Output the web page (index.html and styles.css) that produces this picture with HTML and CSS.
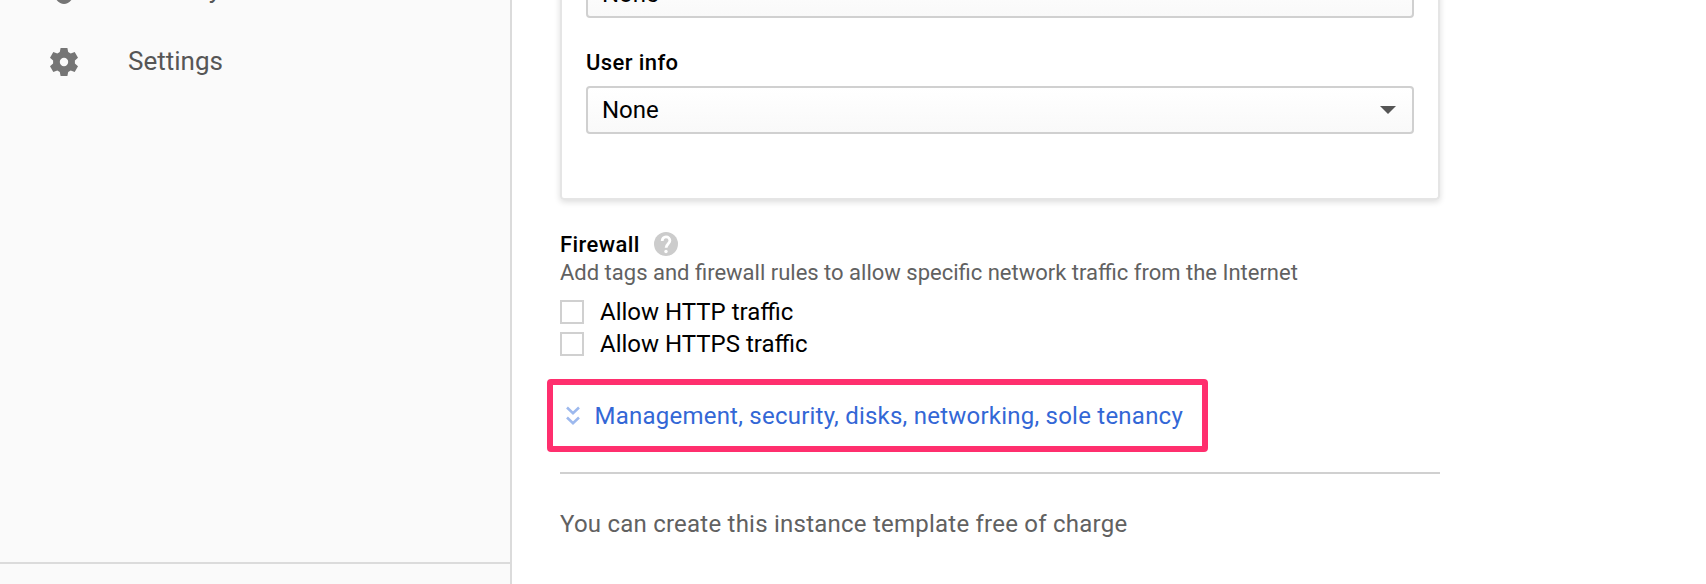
FILE: index.html
```html
<!DOCTYPE html>
<html lang="en">
<head>
<meta charset="utf-8">
<title>Create an instance template</title>
<link rel="stylesheet" href="styles.css">
</head>
<body>
<div class="app">
  <nav class="sidebar">
    <div class="nav-list">
      <a class="nav-item">
        <svg class="nav-icon" viewBox="0 0 28 28"><path d="M14 0 25 5V14C25 22 19 28 14 28 9 28 3 22 3 14V5Z"/></svg>
        <span class="nav-text">Security</span>
      </a>
      <a class="nav-item">
        <svg class="nav-icon" viewBox="0 0 28 28"><path fill-rule="evenodd" d="M10.600 0h6.800l.8 4 2.500 1.400 4-1.400 3.300 5.800-3.100 2.700v3l3.100 2.700-3.300 5.800-4-1.400-2.500 1.400-.8 4h-6.800l-.8-4-2.500-1.400-4 1.400L0 18.200l3.100-2.700v-3L0 9.800 3.300 4l4 1.400L9.800 4ZM14 9.800a4.200 4.200 0 1 0 0 8.400 4.200 4.200 0 1 0 0-8.400Z"/></svg>
        <span class="nav-text">Settings</span>
      </a>
    </div>
    <div class="sidebar-footer"></div>
  </nav>
  <main class="content">
    <section class="card">
      <div class="select"><span>None</span><i class="caret"></i></div>
      <h3 class="label">User info</h3>
      <div class="select"><span>None</span><i class="caret"></i></div>
    </section>
    <div class="firewall-head">
      <h3 class="label firewall-label">Firewall</h3>
      <svg class="help" viewBox="0 0 24 24"><circle cx="12" cy="12" r="12" fill="#ccc"/><path d="M8.200 9.100C8.200 6.600 9.800 4.900 12 4.900s3.900 1.500 3.900 3.700c0 2.900-3.800 3.400-3.800 7.200" fill="none" stroke="#fff" stroke-width="2.800"/><circle cx="12" cy="19.500" r="1.700" fill="#fff"/></svg>
    </div>
    <p class="hint">Add tags and firewall rules to allow specific network traffic from the Internet</p>
    <label class="check"><i class="box"></i><span>Allow HTTP traffic</span></label>
    <label class="check"><i class="box"></i><span>Allow HTTPS traffic</span></label>
    <div class="highlight">
      <svg class="expand" viewBox="0 0 14 20"><path d="M1 1.500 7 7.200 13 1.500M1 11.500 7 17.200 13 11.500"/></svg>
      <a class="link">Management, security, disks, networking, sole tenancy</a>
    </div>
    <hr class="rule">
    <p class="note">You can create this instance template free of charge</p>
  </main>
</div>
</body>
</html>
```
FILE: styles.css
```css
* { box-sizing: border-box; }
body { margin: 0; background: #fff; font-family: Roboto, sans-serif; color: #000; }
h3, p { margin: 0; }
.app { display: flex; width: 1706px; height: 584px; overflow: hidden; }
.sidebar { width: 512px; flex: none; height: 584px; background: #fafafa; border-right: 2px solid #dbdbdb; display: flex; flex-direction: column; overflow: hidden; }
.nav-list { flex: 1; min-height: 0; margin-top: -46px; }
.nav-item { display: flex; align-items: center; height: 72px; padding-left: 50px; font-size: 26px; color: #565656; }
.nav-icon { width: 28px; height: 28px; margin-right: 50px; fill: #757575; }
.nav-text { padding-bottom: 2px; }
.sidebar-footer { height: 22px; border-top: 2px solid #dbdbdb; flex: none; }
.content { padding-left: 48px; width: 928px; }
.card { height: 230px; margin-top: -30px; padding: 0 24px; border: 2px solid #e5e5e5; border-top: 0; border-radius: 4px; box-shadow: 0 2px 6px rgba(0,0,0,.14); }
.select { display: flex; align-items: center; justify-content: space-between; height: 48px; padding: 0 16px 0 14px; border: 2px solid #d0d0d0; border-radius: 4px; background: linear-gradient(#fff, #f9f9f9); font-size: 24px; }
.caret { border: 8px solid transparent; border-top-color: #555; border-bottom: 0; }
.label { font-size: 22px; font-weight: 500; line-height: 28px; letter-spacing: .4px; }
.card .label { margin: 31px 0 9px; }
.firewall-head { display: flex; align-items: center; height: 28px; margin-top: 30px; }
.firewall-label { padding-top: 2px; }
.help { width: 24px; height: 24px; margin-left: 14px; }
.hint { margin: 1px 0 9px; font-size: 22px; line-height: 28px; color: #616161; white-space: nowrap; }
.check { display: flex; align-items: center; height: 32px; font-size: 24px; }
.box { width: 24px; height: 24px; border: 2px solid #d0d0d0; margin-right: 16px; }
.highlight { display: flex; align-items: center; width: 661px; height: 73px; margin: 19px 0 0 -13px; padding-left: 13px; border: 6px solid #ff2f6e; border-radius: 4px; }
.expand { width: 14px; height: 20px; margin-right: 14.5px; fill: none; stroke: #9db9ee; stroke-width: 2.600; }
.link { font-size: 24px; letter-spacing: .23px; color: #3367d6; white-space: nowrap; }
.rule { height: 2px; border: 0; margin: 20px 0 0; background: #d0d0d0; }
.note { margin-top: 36px; font-size: 24px; line-height: 28px; letter-spacing: .23px; color: #616161; white-space: nowrap; }
```
